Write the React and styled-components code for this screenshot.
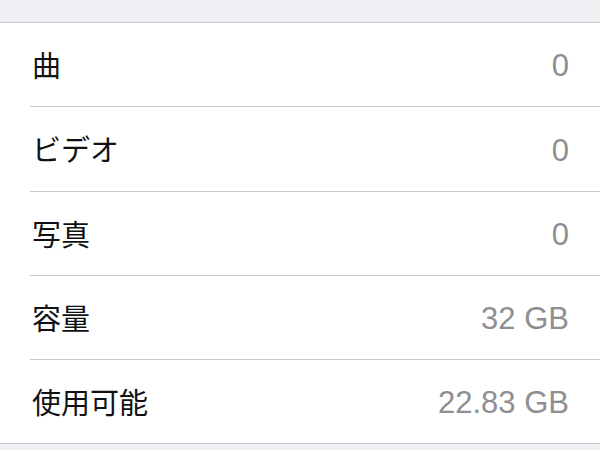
import React from 'react'
import styled, { createGlobalStyle } from 'styled-components'

const GlobalStyle = createGlobalStyle`
  html, body {
    margin: 0;
    padding: 0;
    background: #efeff4;
  }
`

const Page = styled.div`
  width: 600px;
  height: 450px;
  overflow: hidden;
  background: #efeff4;
  padding-top: 22px;
  box-sizing: border-box;
`

const List = styled.div`
  background: #fff;
  border-top: 1px solid #c8c7cc;
  border-bottom: 1px solid #c8c7cc;
  padding-left: 30px;
`

const Row = styled.div`
  display: flex;
  align-items: center;
  justify-content: space-between;
  height: ${p => (p.$tall ? '84px' : '83px')};
  padding-right: 31px;
  border-bottom: ${p => (p.$last ? 'none' : '1px solid #c8c7cc')};
  box-sizing: content-box;
`

const Label = styled.span`
  font-family: "Noto Sans CJK JP", "Noto Sans", sans-serif;
  font-size: 29px;
  color: #111;
  margin-left: 2px;
  padding-bottom: 2px;
`

const Value = styled.span`
  font-family: "Liberation Sans", "Noto Sans CJK JP", sans-serif;
  font-size: 31px;
  color: #8e8e93;
  padding-top: 3px;
`

const rows = [
  ['曲', '0'],
  ['ビデオ', '0'],
  ['写真', '0'],
  ['容量', '32 GB'],
  ['使用可能', '22.83 GB'],
]

export default function App() {
  return (
    <Page>
      <GlobalStyle />
      <List>
        {rows.map(([label, value], i) => (
          <Row key={label} $tall={i === 1} $last={i === rows.length - 1}>
            <Label>{label}</Label>
            <Value>{value}</Value>
          </Row>
        ))}
      </List>
    </Page>
  )
}
